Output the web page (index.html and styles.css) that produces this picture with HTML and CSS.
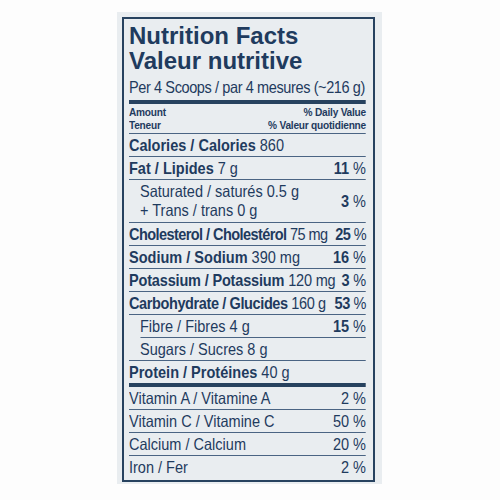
FILE: index.html
```html
<!DOCTYPE html>
<html lang="en">
<head>
    <meta charset="UTF-8">
    <meta name="viewport" content="width=device-width, initial-scale=1.0">
    <link rel="stylesheet" href="styles.css">
    <title>Nutrition Facts</title>
</head>
<body>
    <div class="panel">
        <div class="facts">
            <h1 class="title">Nutrition Facts<br>Valeur nutritive</h1>

            <!-- condensed part of the label -->
            <div class="narrow">
                <div class="serving">Per 4 Scoops / par 4 mesures (~216 g)</div>

                <div class="head">
                    <div>Amount<br>Teneur</div>
                    <div class="dv">% Daily Value<br>% Valeur quotidienne</div>
                </div>

                <div class="row"><span><b>Calories / Calories</b> 860</span></div>
                <div class="row"><span><b>Fat / Lipides</b> 7 g</span><span class="pct"><b>11</b> %</span></div>
                <div class="row double">
                    <span class="sub">Saturated / saturés 0.5 g<br>+ Trans / trans 0 g</span>
                    <span class="pct"><b>3</b> %</span>
                </div>
                <div class="row tight"><span><b>Cholesterol / Cholestérol</b> 75 mg</span><span class="pct"><b>25</b> %</span></div>
                <div class="row"><span><b>Sodium / Sodium</b> 390 mg</span><span class="pct"><b>16</b> %</span></div>
                <div class="row snug"><span><b>Potassium / Potassium</b> 120 mg</span><span class="pct"><b>3</b> %</span></div>
                <div class="row tighter"><span><b>Carbohydrate / Glucides</b> 160 g</span><span class="pct"><b>53</b> %</span></div>
                <div class="row indent-line"><span class="sub">Fibre / Fibres 4 g</span><span class="pct"><b>15</b> %</span></div>
                <div class="row"><span class="sub">Sugars / Sucres 8 g</span></div>
                <div class="row thick"><span><b>Protein / Protéines</b> 40 g</span></div>

                <div class="row"><span>Vitamin A / Vitamine A</span><span class="pct">2 %</span></div>
                <div class="row"><span>Vitamin C / Vitamine C</span><span class="pct">50 %</span></div>
                <div class="row"><span>Calcium / Calcium</span><span class="pct">20 %</span></div>
                <div class="row last"><span>Iron / Fer</span><span class="pct">2 %</span></div>
            </div>
        </div>
    </div>
</body>
</html>
```

FILE: styles.css
```css
*{
    margin: 0px;
    padding: 0px;
    box-sizing: border-box;
}

body{
    background: #fdfdfd;
    font-family: 'Liberation Sans', Arial, sans-serif;
    color: #1f3b5e;
}

.panel{
    width: 265px;
    height: 472px;
    margin: 12px 0 0 117px;
    padding: 5px 7px 0 5px;
    background: #e9edf0;
}

.facts{
    height: 465px;
    border: 2px solid #27425f;
    padding: 0 7px 0 5px;
}

.title{
    font-size: 24px;
    line-height: 25px;
    font-weight: bold;
    padding-top: 4px;
}

/* the label type is condensed, no narrow font here so squeeze it */
.narrow{
    width: calc(237px / 0.88);
    transform: scaleX(0.88);
    transform-origin: left top;
    white-space: nowrap;
}

.serving{
    font-size: 16.5px;
    letter-spacing: -0.45px;
    line-height: 22px;
    padding: 3px 0 2px;
    border-bottom: 4px solid #27425f;
}

.head{
    display: flex;
    justify-content: space-between;
    font-size: 11.5px;
    letter-spacing: -0.25px;
    line-height: 13px;
    font-weight: bold;
    padding: 2px 0 1px;
    border-bottom: 1px solid #4a6483;
}
.head .dv{
    text-align: right;
}

.row{
    display: flex;
    justify-content: space-between;
    align-items: center;
    height: 23px;
    font-size: 16.5px;
    border-bottom: 1px solid #4a6483;
}
.row.tight{
    letter-spacing: -0.65px;
}
.row.tighter{
    letter-spacing: -0.45px;
}
.row.snug{
    letter-spacing: -0.2px;
}
.row.double{
    height: 43px;
    line-height: 19px;
}
.row .sub{
    padding-left: 12.5px;
}
.row.indent-line{
    border-bottom: none;
    background: linear-gradient(#4a6483, #4a6483) 12.5px 100% / calc(100% - 12.5px) 1px no-repeat;
}
.row.thick{
    border-bottom: 4px solid #27425f;
    height: 26px;
}
.row.last{
    border-bottom: none;
}
```
